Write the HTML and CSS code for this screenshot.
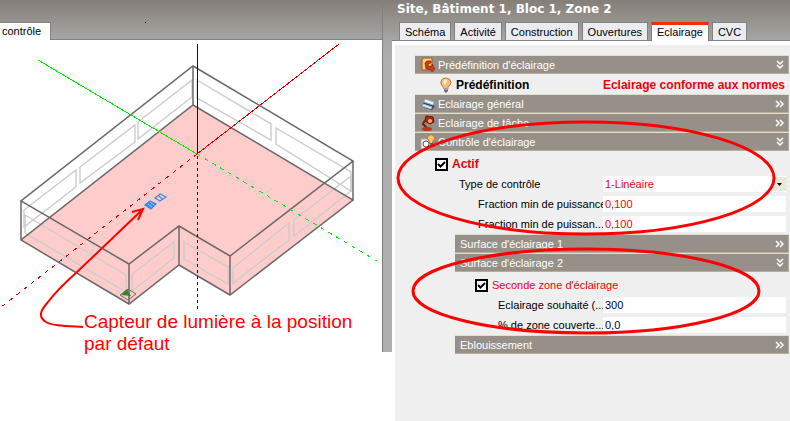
FILE: index.html
```html
<!DOCTYPE html>
<html lang="fr">
<head>
<meta charset="utf-8">
<title>Site, Bâtiment 1, Bloc 1, Zone 2</title>
<link rel="stylesheet" href="styles.css">
</head>
<body>
<main class="app">
  <section class="view">
    <div class="view-bar"><a class="view-tab" href="#controle">contrôle</a><span class="speck"></span></div>
    <div class="view-body">
      <svg class="scene" width="382" height="380" viewBox="0 41 382 380" role="img" aria-label="Plan de la zone">
        <path class="floor" d="M193 105 353 200 230 295 179 265 129 304 21 240Z"/>
        <g class="windows">
          <path d="M138 122 192 80V97L138 139ZM80 167 135 125V142L80 183ZM24 210 76 170V187L24 227Z"/>
          <path d="M197 80 271 124V140L197 98ZM276 128 351 172V191L276 144Z"/>
          <path d="M25 215 126 275V292L25 233ZM132 274 174 242V258L132 291ZM184 242 228 267V284L184 259Z"/>
          <path d="M233 268 289 223V240L233 283ZM294 220 351 176V191L294 236Z"/>
        </g>
        <path class="walls" d="M193 66 353 161 230 256 179 226 129 264 21 201ZM193 105 353 200 230 295 179 265 129 304 21 240ZM193 66V105M353 161V200M230 256V295M179 226V265M129 264V304M21 201V240"/>
        <g class="axes">
          <path class="red" d="M197 154 339 44"/>
          <path class="red dash" d="M197 154 0 308"/>
          <path class="green" d="M38 60 197 154"/>
          <path class="green dash" d="M197 154 377 261"/>
          <path class="blue" d="M197.500 44V154"/>
          <path class="blue blue-dash" d="M197.500 156V309"/>
        </g>
        <g class="sensor">
          <path d="M155 198 160 194 166 197 160 201ZM159 196 162 199"/>
          <path class="filled" d="M145 205 150 201 156 204 151 209Z"/>
          <path class="hatch" d="M148 204 152 207M150 202 154 205"/>
        </g>
        <path class="marker-box" d="M120 295 128 289 136 294 128 300Z"/>
        <path class="marker" d="M121 295 127 289 131 296Z"/>
        <path class="arrow" d="M83 327C65 326 53 326 46 322C38 317 40 311 48 302C57 290 67 281 77 272L142 210M132 212 143 209 138 220"/>
      </svg>
      <p class="caption">Capteur de lumière à la position<br>par défaut</p>
    </div>
  </section>
  <div class="splitter"></div>

  <section class="panel">
    <header class="panel-bar">
      <h1 class="title">Site, Bâtiment 1, Bloc 1, Zone 2</h1>
      <nav class="tabs">
        <a class="tab" href="#schema">Schéma</a>
        <a class="tab" href="#activite">Activité</a>
        <a class="tab" href="#construction">Construction</a>
        <a class="tab" href="#ouvertures">Ouvertures</a>
        <a class="tab active" href="#eclairage">Eclairage</a>
        <a class="tab" href="#cvc">CVC</a>
      </nav>
    </header>
    <form class="sheet">
      <button class="head" type="button">
        <svg class="icon" width="16" height="16" viewBox="0 0 16 16"><path d="M2 2 4 1H12V11L10 13H2Z" fill="#f5cf7c" stroke="#a85a18"/><path d="M5 6Q6 3 11 4V6Q8 6 8 9L12 9 12 7 15 12 12 15 11 13 6 12Z" fill="#d03a12" stroke="#7c1d08" stroke-width=".6"/></svg>
        <span>Prédéfinition d'éclairage</span>
        <svg class="chev" width="8" height="10" viewBox="0 0 8 10"><path d="M1 1 4 4 7 1M1 5 4 8 7 5"/></svg>
      </button>
      <div class="preset">
        <svg class="icon" width="16" height="16" viewBox="0 0 16 16"><path d="M5 10Q2 7 3 4 4 1 8 1 12 1 13 5 13 8 10 10V12H6Z" fill="#f9bd72" stroke="#b67b45"/><path d="M6 3Q9 1 9 5L7 8Q4 6 6 3" fill="#fff0d0"/><path d="M6 11H10V14L8 16 6 14Z" fill="#68696f"/><path d="M6 12H10" stroke="#ddd"/></svg>
        <b>Prédéfinition</b>
        <b class="preset-value">Eclairage conforme aux normes</b>
      </div>
      <button class="head" type="button">
        <svg class="icon" width="16" height="16" viewBox="0 0 16 16"><path d="M1 10 5 5 15 10 12 14 8 13Z" fill="#3c4450"/><path d="M5 3 14 6 13 9 4 6ZM3 8 12 11 11 13 2 10Z" fill="#e9f5ff" stroke="#96b2c8"/></svg>
        <span>Eclairage général</span>
        <svg class="chev" width="9" height="8" viewBox="0 0 9 8"><path d="M1 1 4 4 1 7M5 1 8 4 5 7"/></svg>
      </button>
      <button class="head" type="button">
        <svg class="icon" width="16" height="16" viewBox="0 0 16 16"><path d="M6 1 13 2 14 7 10 9 5 6Z" fill="#a92b12" stroke="#5c160a"/><path d="M5 5 3 9 7 13" fill="none" stroke="#7b1d0d" stroke-width="2"/><circle cx="10" cy="6" r="2" fill="#ffad65"/><ellipse cx="7" cy="14" rx="5" ry="2" fill="#b8351b"/></svg>
        <span>Eclairage de tâche</span>
        <svg class="chev" width="9" height="8" viewBox="0 0 9 8"><path d="M1 1 4 4 1 7M5 1 8 4 5 7"/></svg>
      </button>
      <button class="head" type="button">
        <svg class="icon" width="16" height="16" viewBox="0 0 16 16"><path d="M1 5H10V15H1Z" fill="#eef0ee" stroke="#aaa"/><circle cx="6" cy="10" r="3" fill="#fff" stroke="#555"/><path d="M9 7Q6 4 8 2 11-1 14 2 16 5 13 7L12 10H10Z" fill="#f9c66d" stroke="#b87924"/><path d="M10 9H13V12H11Z" fill="#555"/></svg>
        <span>Contrôle d'éclairage</span>
        <svg class="chev" width="8" height="10" viewBox="0 0 8 10"><path d="M1 1 4 4 7 1M1 5 4 8 7 5"/></svg>
      </button>
      <label class="check"><input type="checkbox" checked><b>Actif</b></label>
      <div class="fields">
        <div class="field">
          <label for="type">Type de contrôle</label>
          <div class="combo">
            <select id="type" class="red-text"><option>1-Linéaire</option></select>
            <svg class="drop" width="13" height="14" viewBox="0 0 13 14"><path d="M4 6H9L6.500 9Z"/></svg>
          </div>
        </div>
        <div class="field sub"><label for="f1">Fraction min de puissance</label><input id="f1" class="red-text" type="text" value="0,100"></div>
        <div class="field sub"><label for="f2">Fraction min de puissan...</label><input id="f2" class="red-text" type="text" value="0,100"></div>
      </div>
      <div class="nested">
        <button class="head" type="button"><span>Surface d'éclairage 1</span><svg class="chev" width="9" height="8" viewBox="0 0 9 8"><path d="M1 1 4 4 1 7M5 1 8 4 5 7"/></svg></button>
        <button class="head" type="button"><span>Surface d'éclairage 2</span><svg class="chev" width="8" height="10" viewBox="0 0 8 10"><path d="M1 1 4 4 7 1M1 5 4 8 7 5"/></svg></button>
      </div>
      <label class="check second"><input type="checkbox" checked><span>Seconde zone d'éclairage</span></label>
      <div class="fields">
        <div class="field deep"><label for="s1">Eclairage souhaité (...</label><input id="s1" type="text" value="300"></div>
        <div class="field deep"><label for="s2">% de zone couverte...</label><input id="s2" type="text" value="0,0"></div>
      </div>
      <div class="nested">
        <button class="head" type="button"><span>Eblouissement</span><svg class="chev" width="9" height="8" viewBox="0 0 9 8"><path d="M1 1 4 4 1 7M5 1 8 4 5 7"/></svg></button>
      </div>
    </form>
    <svg class="rings" width="398" height="421" viewBox="392 0 398 421" aria-hidden="true"><ellipse cx="586" cy="178" rx="188" ry="56"/><ellipse cx="586" cy="291" rx="173" ry="42"/></svg>
  </section>
</main>
</body>
</html>
```
FILE: styles.css
```css
* { box-sizing: border-box; }
body {
  margin: 0;
  background: #fff;
  color: #000;
  font-family: "Liberation Sans", sans-serif;
  font-size: 11px;
  line-height: 16px;
}
b { font-size: 12px; }
a { color: inherit; text-decoration: none; }
.app { display: flex; min-height: 100vh; }
.view { flex: 0 0 382px; overflow: hidden; }
.view-bar {
  display: flex;
  align-items: flex-end;
  height: 40px;
  background: linear-gradient(#857e78, #a6a6a4);
  border-bottom: 1px solid #808080;
}
.view-tab {
  height: 18px;
  width: 51px;
  margin-bottom: -1px;
  padding-left: 2px;
  background: #fff;
  border-top: 1px solid #808080;
  border-right: 1px solid #808080;
  line-height: 16px;
}
.speck { width: 1px; height: 1px; margin: 0 0 16px 94px; background: #000; }
.view-body { position: relative; }
.scene { display: block; margin-top: 1px; }
.caption {
  position: absolute;
  left: 84px;
  top: 270px;
  margin: 0;
  color: #f00;
  font-size: 19px;
  line-height: 22px;
  white-space: nowrap;
}
.floor { fill: #fcc; }
.windows { fill: none; stroke: #ccc; stroke-width: 1.4; }
.walls { fill: none; stroke: #6b6868; stroke-width: 1.5; }
.axes { fill: none; stroke-width: 1; shape-rendering: crispEdges; }
.red { stroke: #e00000; }
.green { stroke: #0e0; }
.blue { stroke: #0000b8; }
.dash { stroke-dasharray: 4 5; }
.blue-dash { stroke-dasharray: 3 3; }
.sensor { fill: none; stroke: #3989e8; stroke-width: 1.3; }
.sensor .filled { fill: #3989e8; }
.sensor .hatch { stroke: #a8cbf4; stroke-width: 1; }
.marker-box { fill: none; stroke: #776b6b; }
.marker { fill: #2c8c22; }
.arrow { fill: none; stroke: #f00; stroke-width: 2; }

.splitter {
  flex: 0 0 10px;
  height: 352px;
  border-left: 1px solid #808080;
  background: linear-gradient(#857e78, #a6a6a4 40px, #aeaeae 60px);
}
.panel { position: relative; flex: 1; min-width: 0; display: flex; flex-direction: column; }
.panel-bar {
  display: flex;
  flex-direction: column;
  justify-content: space-between;
  height: 41px;
  background: linear-gradient(#857e78, #a6a6a4);
  border-bottom: 1px solid #808080;
}
.title {
  margin: 1px 0 0 5px;
  color: #fff;
  font: bold 12px/17px "DejaVu Sans", sans-serif;
  white-space: nowrap;
}
.tabs { display: flex; gap: 3px; padding-left: 7px; }
.tab {
  height: 18px;
  padding: 0 5px;
  background: #ebecf2;
  border: 1px solid #808080;
  border-bottom: 0;
  line-height: 18px;
}
.tab.active { margin-bottom: -1px; height: 19px; background: #fff; border-top: 3px solid #f03000; line-height: 14px; }
.sheet {
  flex: 1;
  margin: 4px 0 0 3px;
  padding: 11px 1px 0 20px;
  background: #efefef;
}
.head {
  display: flex;
  align-items: center;
  width: 100%;
  height: 18px;
  margin: 0 0 1px;
  padding: 0 4px 0 5px;
  border: 0;
  border-right: 1px solid #b5ae9a;
  border-bottom: 1px solid #b5ae9a;
  background: #969089;
  box-shadow: 0 -1px #e2dfcf;
  color: #fff;
  font: inherit;
  text-align: left;
}
.icon { flex: none; margin-right: 2px; }
.chev { margin-left: auto; fill: none; stroke: #fff; stroke-width: 1.5; }
.preset { display: flex; align-items: center; height: 20px; padding: 0 4px 0 23px; }
.preset-value { margin-left: auto; color: #f0000c; }
.check { display: flex; align-items: center; gap: 4px; height: 24px; padding-left: 20px; color: #f0000c; }
.check input {
  appearance: none;
  width: 13px;
  height: 13px;
  margin: 0;
  border: 2px solid #000;
  background: #fff;
}
.check input:checked {
  background: #fff url("data:image/svg+xml,%3Csvg xmlns='http://www.w3.org/2000/svg' viewBox='0 0 9 9'%3E%3Cpath d='M1 4 3.500 6.500 8 2' fill='none' stroke='black' stroke-width='2'/%3E%3C/svg%3E");
}
.check.second { padding-left: 60px; }
.fields { display: grid; gap: 4px; padding-bottom: 3px; }
.field {
  display: grid;
  grid-template-columns: 144px 1fr;
  height: 16px;
  padding: 0 3px 0 44px;
  white-space: nowrap;
}
.field.sub { grid-template-columns: 125px 1fr; padding-left: 63px; }
.field.deep { grid-template-columns: 105px 1fr; padding-left: 83px; }
.field label { line-height: 16px; }
.field input, .field select {
  appearance: none;
  width: 100%;
  height: 16px;
  margin: 0;
  padding: 0 2px;
  border: 0;
  border-radius: 0;
  background: #fff;
  color: #000050;
  font: inherit;
}
.field .red-text { color: #f0000c; }
.combo { position: relative; }
.drop { position: absolute; right: 0; top: 1px; background: #ece9d8; pointer-events: none; }
.nested { padding-left: 40px; }
.rings { position: absolute; left: 0; top: 0; fill: none; stroke: #f00; stroke-width: 3; pointer-events: none; }
```
